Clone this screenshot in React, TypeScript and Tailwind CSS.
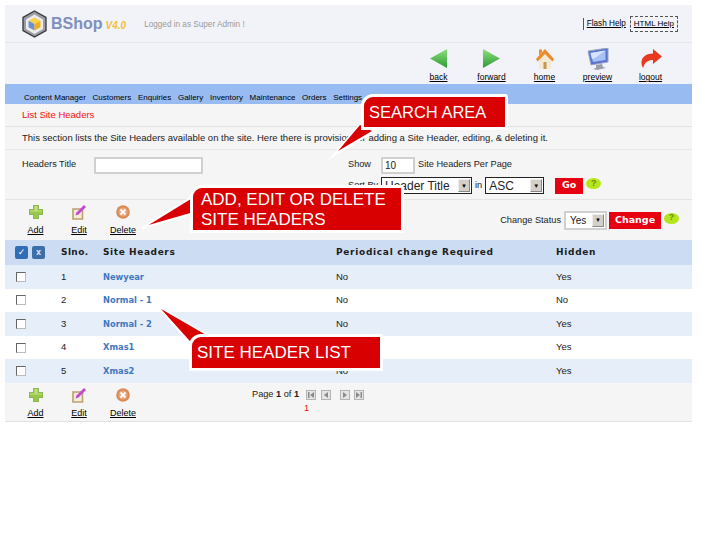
import React from 'react';

const Logo = () => (
  <svg width="25" height="28" viewBox="0 0 25 28" className="shrink-0">
    <path d="M12.500 1 24 7.500v13L12.500 27 1 20.500v-13z" fill="#9b9ea4" stroke="#35373c" strokeWidth="1.300" />
    <path d="M12.500 4.500 21 9.500v9.500l-8.500 5-8.500-5V9.500z" fill="#ececee" />
    <path d="M12.500 7.500l6 3.200-6 3.300-6-3.300z" fill="#f8d24a" />
    <path d="M6.500 10.700l6 3.300v6.500l-6-3.300z" fill="#6f8fd0" />
    <path d="M18.500 10.700l-6 3.300v6.500l6-3.300z" fill="#f0b01a" />
  </svg>
);

const ArrowGradient = ({ id }: { id: string }) => (
  <defs>
    <linearGradient id={id} x1="0" y1="0" x2="0" y2="1">
      <stop offset="0" stopColor="#8fe07c" />
      <stop offset="1" stopColor="#2b9a34" />
    </linearGradient>
  </defs>
);

const BackIcon = () => (
  <svg width="17" height="19" viewBox="0 0 17 19">
    <ArrowGradient id="back-fill" />
    <path d="M0 9.500 17 0v19z" fill="url(#back-fill)" />
  </svg>
);
const ForwardIcon = () => (
  <svg width="17" height="19" viewBox="0 0 17 19">
    <ArrowGradient id="forward-fill" />
    <path d="M17 9.500 0 0v19z" fill="url(#forward-fill)" />
  </svg>
);
const HomeIcon = () => (
  <svg width="18" height="21" viewBox="0 0 18 21">
    <path d="M3 10 9 5l6 5v11H3z" fill="#f6ead6" />
    <path d="M7.500 14h3v7h-3z" fill="#c09a55" />
    <path d="M9 1 18 11l-1.500 2.500L9 6l-7.500 7.500L0 11z" fill="#ea8b2e" />
    <path d="M3 1.500h3v2.500l-3 3.500z" fill="#ea8b2e" />
  </svg>
);
const PreviewIcon = () => (
  <svg width="22" height="22" viewBox="0 0 22 22">
    <path d="M1 3 21 0v14L4 17z" fill="#5a74cf" stroke="#9aa6c4" />
    <path d="M3.500 5 18.500 2.500v9.500L6 14z" fill="#a6c1f6" />
    <path d="M3.500 5 18.500 2.500 8 10l-3 1z" fill="#d6e3fb" />
    <path d="M9 17l6-1 1 3 3 1-9 2-4-1 3-1z" fill="#9a9ea8" />
  </svg>
);
const LogoutIcon = () => (
  <svg width="22" height="19" viewBox="0 0 22 19">
    <path d="M13 0 22 7.500 13 15v-4C8 11 5 13 3 19 -1 12 3 4.500 13 4.500z" fill="#e8391f" />
  </svg>
);
const AddIcon = () => (
  <svg width="14" height="14" viewBox="0 0 14 14">
    <path d="M4.500 0h5v4.500H14v5H9.500V14h-5V9.500H0v-5h4.500z" fill="#96c94a" stroke="#6f9c32" strokeWidth=".6" />
    <path d="M5.500 1h3v4.500h4.500v1H1v-1h4.500z" fill="#bfe07f" />
  </svg>
);
const EditIcon = () => (
  <svg width="14" height="15" viewBox="0 0 14 15">
    <path d="M1 4h9.500v10H1z" fill="#f4ecda" stroke="#bda06c" strokeWidth="1.600" />
    <path d="M12 0l2 2-7.500 7.500-3 1 1-3z" fill="#c548d4" />
  </svg>
);
const DeleteIcon = () => (
  <svg width="14" height="14" viewBox="0 0 14 14">
    <circle cx="7" cy="7" r="6.800" fill="#d98a55" />
    <circle cx="7" cy="7" r="4.600" fill="#e6a77e" />
    <path d="M4.500 4.500l5 5m0-5l-5 5" stroke="#fff" strokeWidth="1.900" />
  </svg>
);
const HelpBadge = () => (
  <span className="flex h-[11px] w-[15px] items-center justify-center rounded-[50%] bg-[#b5e61d] text-[9px] font-bold text-[#6f8a10]">?</span>
);

const PagerButton = ({ points, className }: { points: string; className: string }) => (
  <svg width="10" height="10" viewBox="0 0 10 10" className={className}>
    <path d="M0 0h10v10H0z" fill="#b4b4b4" />
    <path d="M1 1h8v8H1z" fill="#e4e4e4" />
    <path d={points} fill="#8a8a8a" />
  </svg>
);

const ActionIcons = () => (
  <div className="flex text-[9px] text-black underline">
    {[
      { label: 'Add', icon: <AddIcon />, width: 'w-[43px]' },
      { label: 'Edit', icon: <EditIcon />, width: 'w-[44px]' },
      { label: 'Delete', icon: <DeleteIcon />, width: 'w-[44px]' },
    ].map((item) => (
      <div key={item.label} className={`flex flex-col items-center gap-[4px] ${item.width}`}>
        <div className="flex h-[15px] items-center">{item.icon}</div>
        <span>{item.label}</span>
      </div>
    ))}
  </div>
);

const SelectArrow = () => (
  <span className="flex h-[13px] w-[12px] items-center justify-center border border-[#888] border-l-[#eee] border-t-[#eee] bg-[#d4d0c8] text-[6px] leading-none text-black">▼</span>
);

const FakeSelect = ({ text, width }: { text: string; width: string }) => (
  <div className={`flex h-[17px] items-center justify-between border-[1.500px] border-[#222] bg-white pl-[3px] pr-[1px] text-[12px] ${width}`}>
    <span>{text}</span>
    <SelectArrow />
  </div>
);

const rows = [
  { no: 1, name: 'Newyear', change: 'No', hidden: 'Yes' },
  { no: 2, name: 'Normal - 1', change: 'No', hidden: 'No' },
  { no: 3, name: 'Normal - 2', change: 'No', hidden: 'Yes' },
  { no: 4, name: 'Xmas1', change: 'No', hidden: 'Yes' },
  { no: 5, name: 'Xmas2', change: 'No', hidden: 'Yes' },
];

const navItems = ['Content Manager', 'Customers', 'Enquiries', 'Gallery', 'Inventory', 'Maintenance', 'Orders', 'Settings'];

const toolbar = [
  { label: 'back', icon: <BackIcon /> },
  { label: 'forward', icon: <ForwardIcon /> },
  { label: 'home', icon: <HomeIcon /> },
  { label: 'preview', icon: <PreviewIcon /> },
  { label: 'logout', icon: <LogoutIcon /> },
];

const Callout = ({ className, children }: { className: string; children: React.ReactNode }) => (
  <div className={`absolute rounded-tl-[12px] rounded-tr-[3px] border-[3px] border-white bg-[#d80000] font-['Liberation_Sans',sans-serif] text-white ${className}`}>
    {children}
  </div>
);

export default function App() {
  return (
    <div className="relative h-[535px] w-[702px] overflow-hidden bg-white pl-[5px] pt-[5px] font-['Liberation_Sans',Arial,sans-serif] text-[9px] text-[#222]">
      <div className="w-[687px] bg-[#f5f5f5]">
        {/* Header */}
        <div className="flex h-[38px] items-center border-b border-[#e4e6ec] bg-[#f1f3f8] pl-[17px] pr-[14px]">
          <Logo />
          <span className="ml-[4px] text-[16px] font-bold leading-none text-[#7e8fc0]">BShop</span>
          <span className="ml-[3px] mt-[3px] text-[10px] font-bold italic text-[#f0c040]">V4.0</span>
          <span className="ml-[18px] mt-[3px] text-[8.200px] text-[#9a9a9a]">Logged in as Super Admin !</span>
          <div className="ml-auto flex items-center self-start pt-[11px] text-[8.200px] text-black underline">
            <span className="border-l border-[#555] pl-[3px] pr-[4px]">Flash Help</span>
            <span className="border border-dashed border-[#555] px-[3px] py-px text-[8px]">HTML Help</span>
          </div>
        </div>

        {/* Toolbar */}
        <div className="flex h-[41px] justify-end bg-[#f1f3f8] pr-[15px] pt-[4px]">
          {toolbar.map((tool) => (
            <div key={tool.label} className="flex w-[53px] flex-col items-center text-[8.500px] text-black underline">
              <div className="flex h-[24px] items-center">{tool.icon}</div>
              <span className="mt-[1px]">{tool.label}</span>
            </div>
          ))}
        </div>

        {/* Nav */}
        <div className="flex h-[20px] items-end gap-[6.700px] bg-[#98bcf1] pl-[19px] text-[8px] text-black">
          {navItems.map((item) => (
            <span key={item}>{item}</span>
          ))}
        </div>

        <div className="flex h-[23px] items-center border-b border-[#e2e2e2] pl-[17px] text-[9.500px] text-[#ee1111]">List Site Headers</div>

        <div className="flex h-[23px] items-center border-b border-[#e8e8e8] pl-[17px] text-[9.500px]">
          This section lists the Site Headers available on the site. Here there is provision for adding a Site Header, editing, &amp; deleting it.
        </div>

        {/* Search */}
        <div className="flex h-[50px] border-b border-[#e4e4e4] pl-[17px] pt-[6px] text-[9.200px]">
          <div className="flex h-[18px] w-[326px] items-center">
            <span className="w-[72px]">Headers Title</span>
            <div className="h-[17px] w-[109px] border-2 border-[#d0d0d0] bg-white" />
          </div>
          <div className="flex flex-col gap-[3px]">
            <div className="flex h-[18px] items-center">
              <span className="w-[33px]">Show</span>
              <div className="mr-[3px] flex h-[17px] w-[34px] items-center border-2 border-[#d0d0d0] bg-white pl-[2px] text-[10px]">10</div>
              <span>Site Headers Per Page</span>
            </div>
            <div className="flex h-[17px] items-center">
              <span className="w-[33px]">Sort By</span>
              <FakeSelect text="Header Title" width="w-[91px]" />
              <span className="mx-[3px]">in</span>
              <FakeSelect text="ASC" width="w-[59px]" />
              <span className="ml-[11px] flex h-[16px] w-[28px] items-center justify-center bg-[#e60012] font-['DejaVu_Sans',sans-serif] text-[9.500px] font-bold text-white">Go</span>
              <span className="mb-[4px] ml-[3px]"><HelpBadge /></span>
            </div>
          </div>
        </div>

        {/* Actions */}
        <div className="flex h-[40px] items-center pl-[9px] pr-[13px] pt-[2px]">
          <ActionIcons />
          <div className="ml-auto flex items-center text-[9.200px]">
            <span className="mr-[3px]">Change Status</span>
            <div className="mb-[2px] flex h-[19px] w-[43px] items-center justify-between border-2 border-[#d0d0d0] bg-white pl-[4px] pr-[1px] text-[10px]">
              <span>Yes</span>
              <SelectArrow />
            </div>
            <span className="mb-[2px] ml-[2px] mr-[3px] flex h-[17px] w-[52px] items-center justify-center bg-[#e60012] font-['DejaVu_Sans',sans-serif] text-[9.500px] font-bold text-white">Change</span>
            <span className="mb-[6px]"><HelpBadge /></span>
          </div>
        </div>

        {/* Table */}
        <div className="grid h-[25px] grid-cols-[56px_42px_233px_220px_1fr] items-center bg-[#ccdcf3] font-['DejaVu_Sans',sans-serif] text-[9px] font-bold tracking-[0.7px] text-[#1c1c1c]">
          <div className="flex gap-[4px] pl-[10px] tracking-normal">
            <span className="flex h-[13px] w-[13px] items-center justify-center rounded-[2px] bg-[#2f6db5] text-[9px] text-white">✓</span>
            <span className="flex h-[13px] w-[13px] items-center justify-center rounded-[2px] bg-[#3c6ea8] text-[8px] text-[#cfe0f5]">x</span>
          </div>
          <span className="tracking-[0.4px]">Slno.</span>
          <span className="tracking-[0.6px]">Site Headers</span>
          <span>Periodical change Required</span>
          <span>Hidden</span>
        </div>
        {rows.map((row) => (
          <div
            key={row.no}
            className={`grid h-[23.600px] grid-cols-[56px_42px_233px_220px_1fr] items-center text-[9.500px] ${row.no % 2 === 1 ? 'bg-[#e6eefa]' : 'bg-white'}`}
          >
            <div className="pl-[11px]">
              <div className="h-[10px] w-[10px] border border-[#666] border-b-[#bbb] border-r-[#bbb] bg-white" />
            </div>
            <span>{row.no}</span>
            <span className="font-['DejaVu_Sans',sans-serif] text-[8.300px] font-bold text-[#3f78c0]">{row.name}</span>
            <span>{row.change}</span>
            <span>{row.hidden}</span>
          </div>
        ))}

        {/* Bottom bar */}
        <div className="flex h-[39px] border-b border-[#e2e2e2] pl-[9px] pt-[5px]">
          <ActionIcons />
          <div className="ml-[107px] flex flex-col text-[9.200px]">
            <div className="flex items-center">
              <span>Page <b>1</b> of <b>1</b></span>
              <div className="ml-[7px] flex items-center">
                <PagerButton points="M8 2v6L4 5zM2 2h1.500v6H2z" className="mr-[5px]" />
                <PagerButton points="M7 2v6L3 5z" className="mr-[9px]" />
                <PagerButton points="M3 2v6l4-3z" className="mr-[4px]" />
                <PagerButton points="M2 2v6l4-3zM6.500 2H8v6H6.500z" className="" />
              </div>
            </div>
            <span className="ml-[52px] text-[#ee1111]">1</span>
          </div>
        </div>
      </div>

      {/* Callouts */}
      <svg className="pointer-events-none absolute left-0 top-0" width="702" height="535">
        <path d="M327 161 358 125 376 131z" fill="#fff" />
        <path d="M338 151 360 125 372 131z" fill="#d80000" />
        <path d="M142 228 194 196V213z" fill="#d80000" stroke="#fff" strokeWidth="2" />
        <path d="M156 305 208 335 192 345z" fill="#d80000" stroke="#fff" strokeWidth="2" />
      </svg>
      <Callout className="left-[361px] top-[94px] flex h-[36px] w-[147px] items-center pl-[5px] text-[16.500px]">SEARCH AREA</Callout>
      <Callout className="left-[190px] top-[185px] h-[48px] w-[214px] pl-[8px] pt-[2px] text-[17px] leading-[20px]">
        ADD, EDIT OR DELETE
        <br />
        SITE HEADERS
      </Callout>
      <Callout className="left-[189px] top-[334px] flex h-[37px] w-[194px] items-center pl-[5px] text-[17px]">SITE HEADER LIST</Callout>
    </div>
  );
}
